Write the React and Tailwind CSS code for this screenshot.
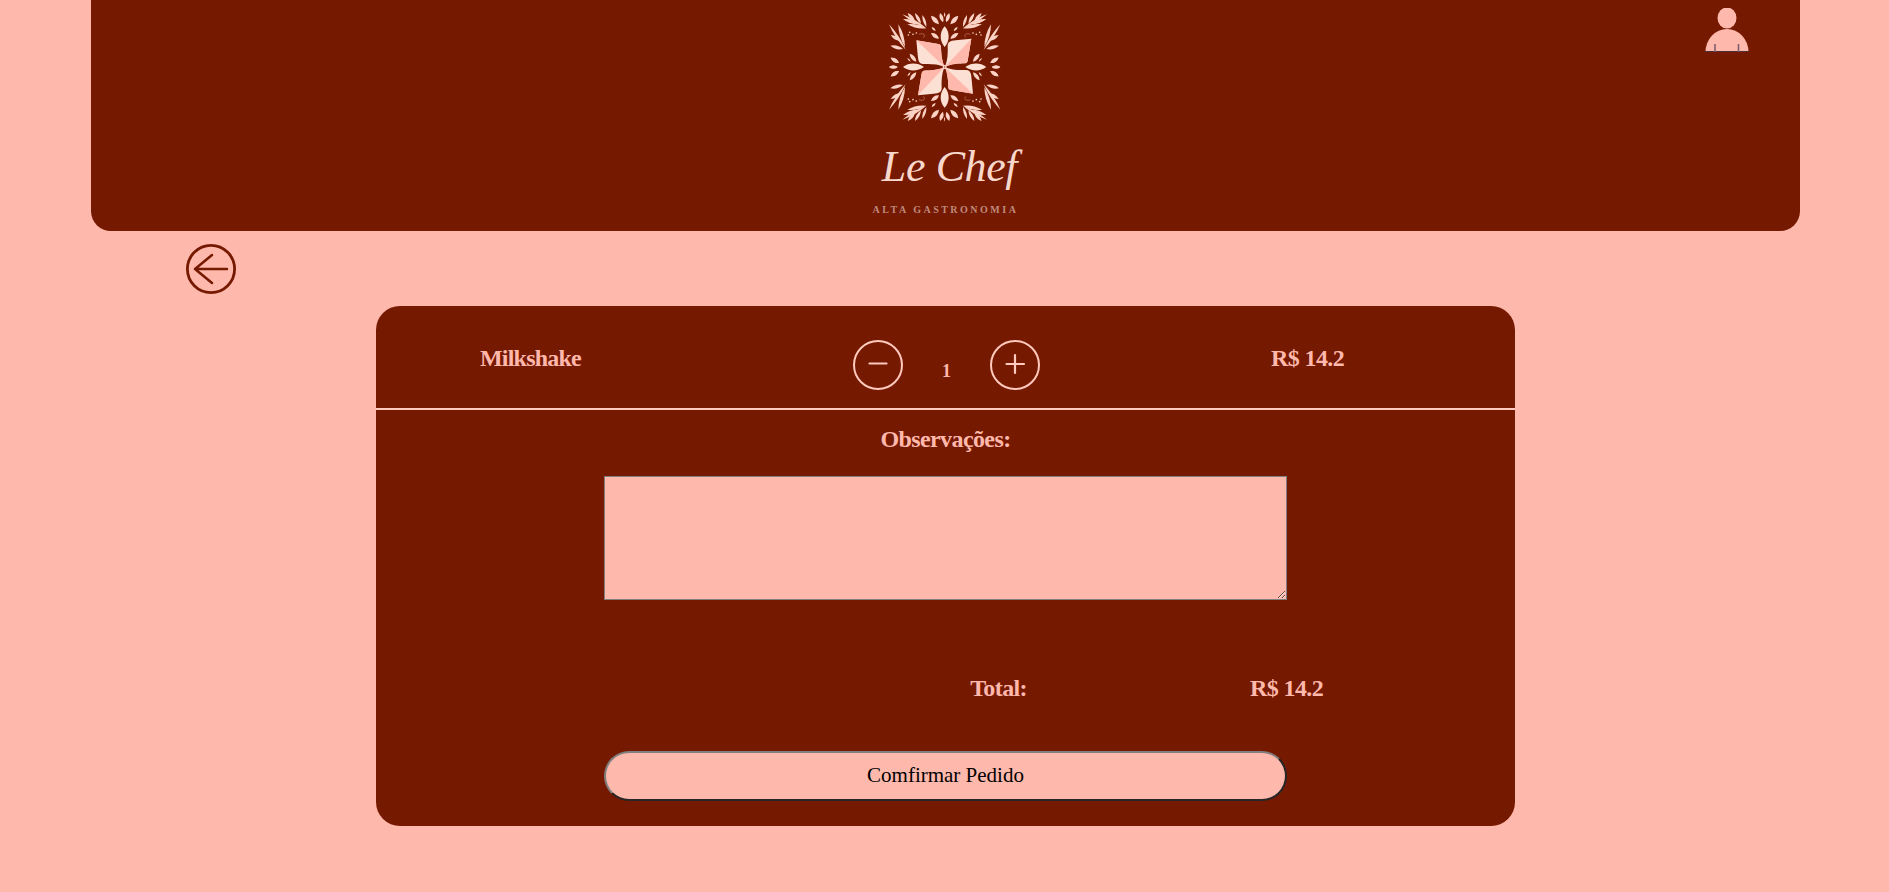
import React from 'react';

const DARK = '#751900';
const PINK = '#ffb8ac';

function leaf(x1, y1, x2, y2, w) {
  const mx = (x1 + x2) / 2;
  const my = (y1 + y2) / 2;
  const dx = x2 - x1;
  const dy = y2 - y1;
  const len = Math.hypot(dx, dy) || 1;
  const nx = (-dy / len) * w;
  const ny = (dx / len) * w;
  return `M${x1} ${y1}Q${mx + nx} ${my + ny} ${x2} ${y2}Q${mx - nx} ${my - ny} ${x1} ${y1}Z`;
}

const LEAVES = [
  // top sprig
  [262, 84, 190, 42, 8], [262, 84, 205, 72, 10], [240, 72, 192, 56, 10], [228, 62, 206, 38, 9],
  [246, 70, 228, 38, 9], [262, 80, 250, 44, 8],
  // left sprig
  [200, 148, 150, 72, 8], [198, 140, 178, 72, 10], [186, 122, 155, 104, 10], [192, 146, 154, 136, 10],
  // small leaves near top axis
  [300, 72, 276, 46, 13], [312, 66, 303, 38, 11], [300, 115, 276, 98, 12], [290, 92, 278, 80, 6],
  [317, 50, 317, 36, 3],
  // small leaves near left axis
  [180, 188, 155, 172, 11], [176, 199, 150, 199, 9], [180, 212, 156, 228, 11],
  [232, 184, 212, 160, 11], [215, 185, 205, 172, 5],
];

const DOTS = [[212, 96], [222, 102], [232, 98], [208, 104]];

function Quadrant({ transform }) {
  return (
    <g transform={transform}>
      <g fill="#fbd3c6">
        {LEAVES.map((l, i) => <path key={i} d={leaf(...l)} />)}
        {DOTS.map(([x, y], i) => <circle key={i} cx={x} cy={y} r="2.5" />)}
      </g>
      <path d="M240 102 C255 96 262 106 252 112" fill="none" stroke="#c77f6e" strokeWidth="2" />
    </g>
  );
}

function Petal({ angle }) {
  return (
    <g transform={`rotate(${angle} 317 200)`}>
      <path d="M316 199 C308 180 306 155 306 138 C305 134 302 132 298 131 L232 120 C234 140 236 165 238 178 C240 187 245 191 253 191 C275 190 297 191 316 199Z" fill="#fce0d4" />
      <path d="M316 199 L232 120 L298 131 C302 132 305 134 306 138 C306 155 308 180 316 199Z" fill={PINK} />
    </g>
  );
}

function Logo() {
  return (
    <svg viewBox="150 35 336 330" className="w-[112px] h-[110px] block">
      <Quadrant />
      <Quadrant transform="matrix(-1 0 0 1 634 0)" />
      <Quadrant transform="matrix(1 0 0 -1 0 400)" />
      <Quadrant transform="matrix(-1 0 0 -1 634 400)" />
      <g fill="#fce0d4">
        <path d="M317 78 C333 95 333 122 317 140 C301 122 301 95 317 78Z" />
        <path d="M317 322 C333 305 333 278 317 260 C301 278 301 305 317 322Z" />
        <path d="M192 200 C210 186 235 186 255 200 C235 214 210 214 192 200Z" />
        <path d="M442 200 C424 186 399 186 379 200 C399 214 424 214 442 200Z" />
      </g>
      <Petal angle={0} />
      <Petal angle={90} />
      <Petal angle={180} />
      <Petal angle={270} />
      <circle cx="317" cy="200" r="6" fill="#fce0d4" />
      <circle cx="317" cy="200" r="2.5" fill="#a8503c" />
    </svg>
  );
}

function UserIcon() {
  return (
    <svg viewBox="0 0 44 44" className="w-[44px] h-[44px] block">
      <ellipse cx="22" cy="10" rx="9.5" ry="10.5" fill={PINK} />
      <path d="M0.5 44 A21.5 23 0 0 1 43.5 44Z" fill={PINK} />
      <path d="M0 43.5H44" stroke="#4a3034" strokeWidth="1" />
      <path d="M10 36V44M33.5 36V44" stroke="#7a5a68" strokeWidth="1.5" />
    </svg>
  );
}

function RoundIcon({ color, children, width = 2 }) {
  return (
    <svg viewBox="0 0 50 50" className="w-[50px] h-[50px] block" fill="none" stroke={color} strokeWidth={width} strokeLinecap="round" strokeLinejoin="round">
      <circle cx="25" cy="25" r={25 - width / 2} />
      {children}
    </svg>
  );
}

export default function App() {
  return (
    <div className="h-[892px] overflow-hidden bg-[#ffb8ac] font-['Liberation_Serif',serif] flex flex-col items-center pl-[2px]">
      <header className="w-[1709px] h-[231px] shrink-0 bg-[#751900] rounded-b-[20px] grid grid-cols-[1fr_auto_1fr]">
        <div />
        <div className="flex flex-col items-center pt-3">
          <Logo />
          <span className="mt-[20px] ml-[8px] text-[44px] leading-[50px] italic text-[#f8d8cc] tracking-[-0.4px]">Le Chef</span>
          <span className="mt-[12px] text-[10px] leading-3 text-[#c08a7e] tracking-[2.5px] font-bold">ALTA GASTRONOMIA</span>
        </div>
        <div className="flex justify-end pt-2 pr-[51px]">
          <UserIcon />
        </div>
      </header>

      <div className="w-[1709px] pl-[95px] pt-[13px]">
        <RoundIcon color={DARK} width={2.8}>
          <path d="M41 25H9M26 11L9 25L26 39" strokeWidth="2.5" />
        </RoundIcon>
      </div>

      <main className="mt-[12px] w-[1139px] h-[520px] shrink-0 bg-[#751900] rounded-[24px] flex flex-col text-[#ffb8ac]">
        <div className="h-[102px] flex items-start">
          <div className="w-[477px] pl-[104px] pt-[38px] text-[24px] leading-7 font-bold tracking-[-0.8px]">Milkshake</div>
          <div className="pt-[34px]">
            <RoundIcon color="#ffc9bd">
              <path d="M16.5 23.5H33.5" strokeWidth="2.2" />
            </RoundIcon>
          </div>
          <div className="w-[87px] pt-[53px] text-center text-[18px] leading-6 font-bold">1</div>
          <div className="pt-[34px]">
            <RoundIcon color="#ffc9bd">
              <path d="M16.5 24H34M25 15V33" strokeWidth="2.2" />
            </RoundIcon>
          </div>
          <div className="pl-[231px] pt-[38px] text-[24px] leading-7 font-bold tracking-[-0.6px] whitespace-nowrap">R$ 14.2</div>
        </div>
        <div className="h-[2px] bg-[#ffc9bd]" />
        <div className="mt-[15px] text-center text-[24px] leading-7 font-bold tracking-[-0.6px]">Observações:</div>
        <textarea className="mt-[23px] ml-[228px] w-[683px] h-[124px] bg-[#ffb8ac] border border-solid border-[#808080] resize-y block" />
        <div className="mt-[74px] flex text-[24px] leading-7 font-bold tracking-[-0.6px]">
          <div className="w-[651px] text-right whitespace-nowrap">Total:</div>
          <div className="pl-[223px] whitespace-nowrap">R$ 14.2</div>
        </div>
        <button className="mt-[49px] ml-[228px] w-[683px] h-[50px] rounded-[25px] bg-[#ffb8ac] border-2 border-t-[#7f7f7f] border-l-[#7f7f7f] border-r-[#262626] border-b-[#262626] text-black text-[21px] font-['Liberation_Serif',serif]">Comfirmar Pedido</button>
      </main>
    </div>
  );
}
